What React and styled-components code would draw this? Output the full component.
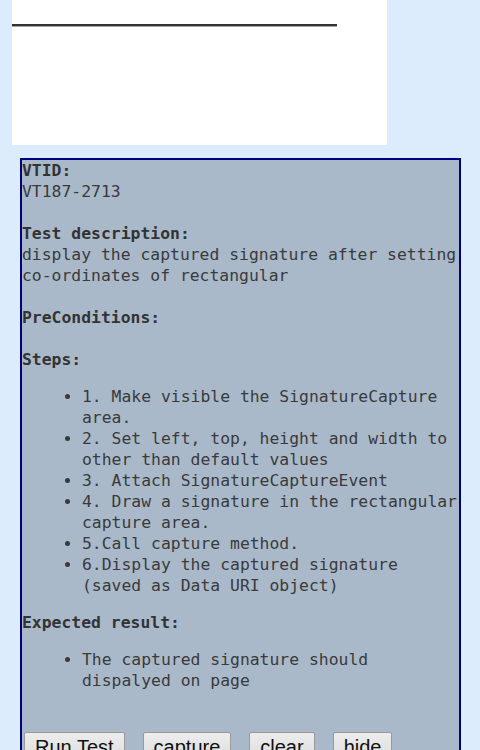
import React from "react";
import styled, { createGlobalStyle } from "styled-components";

const Global = createGlobalStyle`
  html, body {
    margin: 0;
    padding: 0;
    background: #dcecfc;
  }
  body {
    font-family: "DejaVu Sans Mono", monospace;
  }
`;

const Page = styled.div`
  display: flex;
  flex-direction: column;
  align-items: flex-start;
  padding-left: 12px;
`;

const SignatureArea = styled.div`
  width: 375px;
  height: 145px;
  background: #ffffff;
`;

const SignLine = styled.svg`
  display: block;
`;

const Panel = styled.div`
  margin-top: 13px;
  margin-left: 8px;
  width: 437px;
  background: #a9b9ca;
  border: 2px solid #000080;
  color: #3a3a3a;
  font-family: "DejaVu Sans Mono", monospace;
  font-size: 16.4px;
  line-height: 21px;
`;

const Label = styled.b`
  font-weight: bold;
  color: #333333;
`;

const Steps = styled.ul`
  margin: 16px 0;
  padding-left: 60px;
  list-style: disc;
`;

const Item = styled.li``;

const ButtonRow = styled.div`
  display: flex;
  gap: 18px;
  padding-left: 2px;
  margin-top: 41px;
`;

const Button = styled.button`
  font-family: "Liberation Sans", Arial, sans-serif;
  font-size: 20px;
  line-height: 24px;
  color: #111;
  padding: 2px 10px;
  border: 1px solid #999;
  border-radius: 2px;
  background: linear-gradient(#ededed, #dcdcdc);
`;

export default function App() {
  return (
    <>
      <Global />
      <Page>
        <SignatureArea>
          <SignLine width="325" height="30" viewBox="0 0 325 30">
            <rect x="0" y="24" width="325" height="2" fill="#333333" />
            <rect x="0" y="26" width="325" height="1" fill="#a8a8a8" />
          </SignLine>
        </SignatureArea>
        <Panel>
          <Label>VTID:</Label>
          <br />
          VT187-2713
          <br />
          <br />
          <Label>Test description:</Label>
          <br />
          display the captured signature after setting co-ordinates of rectangular
          <br />
          <br />
          <Label>PreConditions:</Label>
          <br />
          <br />
          <Label>Steps:</Label>
          <Steps>
            <Item>1. Make visible the SignatureCapture area.</Item>
            <Item>2. Set left, top, height and width to other than default values</Item>
            <Item>3. Attach SignatureCaptureEvent</Item>
            <Item>4. Draw a signature in the rectangular capture area.</Item>
            <Item>5.Call capture method.</Item>
            <Item>6.Display the captured signature (saved as Data URI object)</Item>
          </Steps>
          <Label>Expected result:</Label>
          <Steps>
            <Item>The captured signature should dispalyed on page</Item>
          </Steps>
          <ButtonRow>
            <Button>Run Test</Button>
            <Button>capture</Button>
            <Button>clear</Button>
            <Button>hide</Button>
          </ButtonRow>
        </Panel>
      </Page>
    </>
  );
}
